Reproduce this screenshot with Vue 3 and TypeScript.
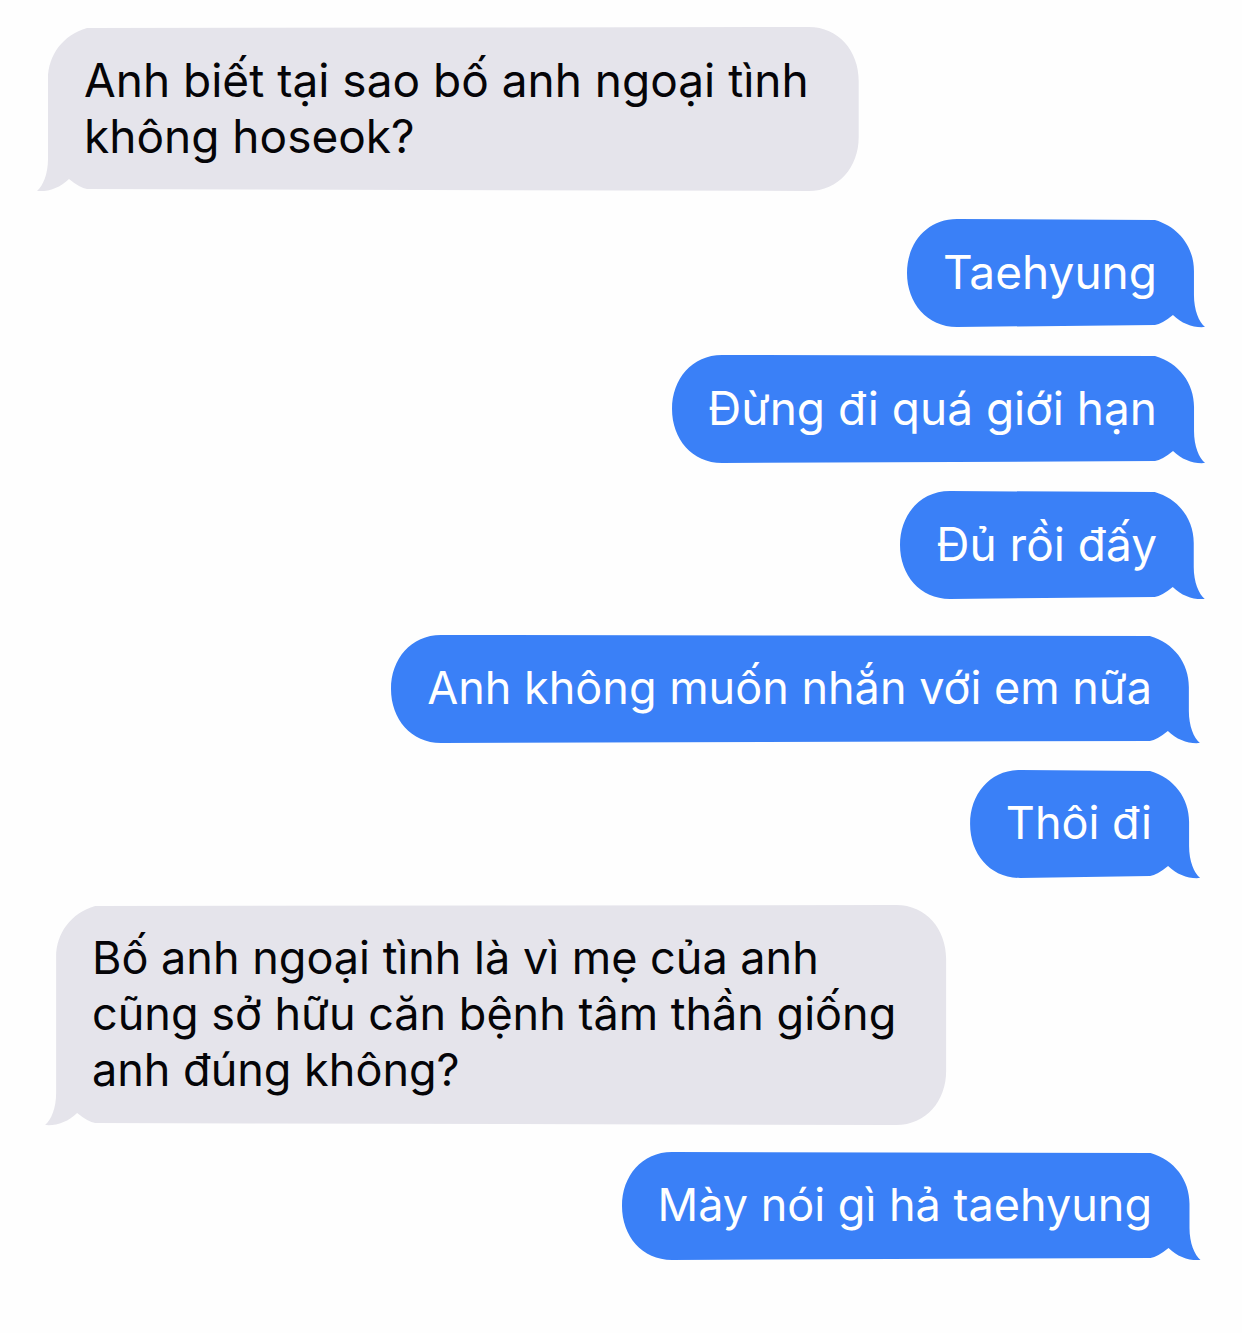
<script setup lang="ts">
import { onBeforeUnmount, onMounted, reactive, ref } from 'vue'

interface Message {
  id: number
  side: 'received' | 'sent'
  text: string
}

interface Size {
  w: number
  h: number
}

const threads: Message[][] = [
  [
    { id: 1, side: 'received', text: 'Anh biết tại sao bố anh ngoại tình\nkhông hoseok?' },
    { id: 2, side: 'sent', text: 'Taehyung' },
    { id: 3, side: 'sent', text: 'Đừng đi quá giới hạn' },
    { id: 4, side: 'sent', text: 'Đủ rồi đấy' },
  ],
  [
    { id: 5, side: 'sent', text: 'Anh không muốn nhắn với em nữa' },
    { id: 6, side: 'sent', text: 'Thôi đi' },
    { id: 7, side: 'received', text: 'Bố anh ngoại tình là vì mẹ của anh\ncũng sở hữu căn bệnh tâm thần giống\nanh đúng không?' },
    { id: 8, side: 'sent', text: 'Mày nói gì hả taehyung' },
  ],
]

const chat = ref<HTMLElement | null>(null)
const sizes = reactive<Record<number, Size>>({})
let observer: ResizeObserver | undefined

function measure() {
  chat.value?.querySelectorAll<HTMLElement>('[data-id]').forEach((el) => {
    sizes[Number(el.dataset.id)] = { w: el.offsetWidth, h: el.offsetHeight }
  })
}

onMounted(() => {
  measure()
  observer = new ResizeObserver(measure)
  chat.value?.querySelectorAll('[data-id]').forEach((el) => observer?.observe(el))
})

onBeforeUnmount(() => observer?.disconnect())

// Outline of a bubble whose tail hangs off the lower right corner.
function outline({ w, h }: Size): string {
  return [
    `M50 0 L${w - 39} 1`,
    `C${w - 15} 8 ${w} 28 ${w} 52`,
    `L${w} ${h - 32}`,
    `C${w} ${h - 17} ${w + 5} ${h - 5} ${w + 11} ${h}`,
    `C${w} ${h + 1} ${w - 12} ${h - 3} ${w - 21} ${h - 12}`,
    `Q${w - 32} ${h - 3} ${w - 39} ${h - 2}`,
    `L50 ${h}`,
    `C20 ${h} 0 ${h - 24} 0 ${h - 54}`,
    `L0 54`,
    `C0 24 20 0 50 0 Z`,
  ].join(' ')
}
</script>

<template>
  <main ref="chat" class="chat">
    <section v-for="(thread, index) in threads" :key="index" class="thread">
      <p
        v-for="message in thread"
        :key="message.id"
        :data-id="message.id"
        class="bubble"
        :class="message.side"
      >
        <svg
          v-if="sizes[message.id]"
          class="shape"
          :viewBox="`0 0 ${sizes[message.id].w} ${sizes[message.id].h}`"
          aria-hidden="true"
        >
          <path :d="outline(sizes[message.id])" />
        </svg>
        <span class="text">{{ message.text }}</span>
      </p>
    </section>
  </main>
</template>

<style>
body {
  margin: 0;
  background: #fefefe;
}
</style>

<style scoped>
.chat {
  display: flex;
  flex-direction: column;
  gap: 36px;
  padding: 27px 0 72px;
  font-family: Inter, "Noto Sans", sans-serif;
  font-size: 46px;
  line-height: 56px;
}

.thread {
  display: flex;
  flex-direction: column;
  gap: 28px;
  padding: 0 48px;
}

.thread + .thread {
  gap: 27px;
  padding: 0 53px 0 56px;
  font-size: 45px;
}

.bubble {
  position: relative;
  margin: 0;
  padding: 25px 37px 27px 36px;
}

.received {
  align-self: flex-start;
  padding-right: 50px;
  color: #050508;
}

.sent {
  align-self: flex-end;
  color: #fff;
}

.shape {
  position: absolute;
  inset: 0;
  width: 100%;
  height: 100%;
  overflow: visible;
}

.received .shape {
  fill: #e5e4eb;
  transform: scaleX(-1);
}

.sent .shape {
  fill: #3a80f7;
}

.text {
  position: relative;
  display: block;
  white-space: pre;
}
</style>
